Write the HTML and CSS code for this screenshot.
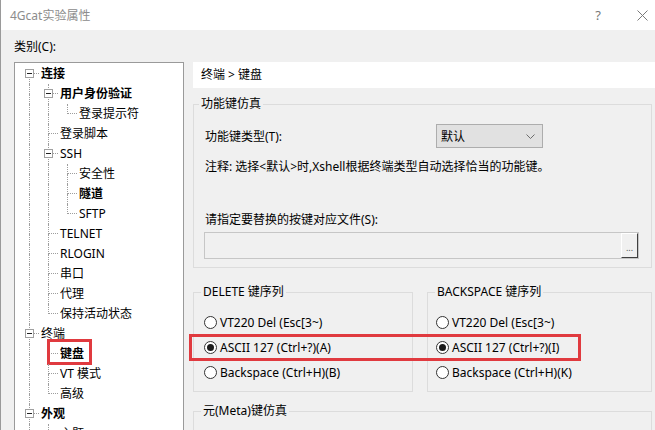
FILE: index.html
```html
<!DOCTYPE html>
<html lang="zh-CN">
<head>
<meta charset="utf-8">
<title>4Gcat实验属性</title>
<link rel="stylesheet" href="styles.css">
</head>
<body>
<div class="win">
  <div class="titlebar">
    <span class="title">4Gcat实验属性</span>
    <span class="tb-help">?</span>
    <span class="tb-close"><svg width="11" height="11" viewBox="0 0 11 11"><path d="M0.5 0.5L10.5 10.5M10.5 0.5L0.5 10.5" stroke="#7a7a7a" stroke-width="1" fill="none"/></svg></span>
  </div>
  <div class="body">
    <div class="cat-label">类别(C):</div>
    <div class="content">
      <div class="tree">
        <div class="row"><span class="g first"><i class="tr"></i><i class="br"></i><b class="bx"></b></span><span class="lbl strong">连接</span></div>
        <div class="row"><span class="g line"><i class="tr"></i><i class="br"></i></span><span class="g tee"><i class="tr"></i><i class="br"></i><b class="bx"></b></span><span class="lbl strong">用户身份验证</span></div>
        <div class="row"><span class="g line"><i class="tr"></i><i class="br"></i></span><span class="g line"><i class="tr"></i><i class="br"></i></span><span class="g ell"><i class="tr"></i><i class="br"></i></span><span class="lbl">登录提示符</span></div>
        <div class="row"><span class="g line"><i class="tr"></i><i class="br"></i></span><span class="g tee"><i class="tr"></i><i class="br"></i></span><span class="lbl">登录脚本</span></div>
        <div class="row"><span class="g line"><i class="tr"></i><i class="br"></i></span><span class="g tee"><i class="tr"></i><i class="br"></i><b class="bx"></b></span><span class="lbl">SSH</span></div>
        <div class="row"><span class="g line"><i class="tr"></i><i class="br"></i></span><span class="g line"><i class="tr"></i><i class="br"></i></span><span class="g tee"><i class="tr"></i><i class="br"></i></span><span class="lbl">安全性</span></div>
        <div class="row"><span class="g line"><i class="tr"></i><i class="br"></i></span><span class="g line"><i class="tr"></i><i class="br"></i></span><span class="g tee"><i class="tr"></i><i class="br"></i></span><span class="lbl strong">隧道</span></div>
        <div class="row"><span class="g line"><i class="tr"></i><i class="br"></i></span><span class="g line"><i class="tr"></i><i class="br"></i></span><span class="g ell"><i class="tr"></i><i class="br"></i></span><span class="lbl">SFTP</span></div>
        <div class="row"><span class="g line"><i class="tr"></i><i class="br"></i></span><span class="g tee"><i class="tr"></i><i class="br"></i></span><span class="lbl">TELNET</span></div>
        <div class="row"><span class="g line"><i class="tr"></i><i class="br"></i></span><span class="g tee"><i class="tr"></i><i class="br"></i></span><span class="lbl">RLOGIN</span></div>
        <div class="row"><span class="g line"><i class="tr"></i><i class="br"></i></span><span class="g tee"><i class="tr"></i><i class="br"></i></span><span class="lbl">串口</span></div>
        <div class="row"><span class="g line"><i class="tr"></i><i class="br"></i></span><span class="g tee"><i class="tr"></i><i class="br"></i></span><span class="lbl">代理</span></div>
        <div class="row"><span class="g line"><i class="tr"></i><i class="br"></i></span><span class="g ell"><i class="tr"></i><i class="br"></i></span><span class="lbl">保持活动状态</span></div>
        <div class="row"><span class="g tee"><i class="tr"></i><i class="br"></i><b class="bx"></b></span><span class="lbl">终端</span></div>
        <div class="row"><span class="g line"><i class="tr"></i><i class="br"></i></span><span class="g tee"><i class="tr"></i><i class="br"></i></span><span class="lbl strong">键盘</span><span class="mark-tree"></span></div>
        <div class="row"><span class="g line"><i class="tr"></i><i class="br"></i></span><span class="g tee"><i class="tr"></i><i class="br"></i></span><span class="lbl">VT 模式</span></div>
        <div class="row"><span class="g line"><i class="tr"></i><i class="br"></i></span><span class="g ell"><i class="tr"></i><i class="br"></i></span><span class="lbl">高级</span></div>
        <div class="row"><span class="g tee"><i class="tr"></i><i class="br"></i><b class="bx"></b></span><span class="lbl strong">外观</span></div>
        <div class="row"><span class="g line"><i class="tr"></i><i class="br"></i></span><span class="g tee"><i class="tr"></i><i class="br"></i></span><span class="lbl">主题</span></div>
      </div>
      <div class="panel">
        <div class="panel-head">终端 &gt; 键盘</div>
        <fieldset class="grp grp-fn">
          <legend class="lg-fn">功能键仿真</legend>
          <div class="fn-body">
            <div class="fn-row">
              <span class="fn-label">功能键类型(T):</span>
              <span class="select"><span>默认</span><svg class="chev" width="9" height="5" viewBox="0 0 9 5"><path d="M0.5 0.5L4.5 4.5L8.5 0.5" stroke="#6d6d6d" stroke-width="1" fill="none"/></svg></span>
            </div>
            <div class="note">注释: 选择&lt;默认&gt;时,Xshell根据终端类型自动选择恰当的功能键。</div>
            <div class="file-label">请指定要替换的按键对应文件(S):</div>
            <div class="file-box"><span class="browse">...</span></div>
          </div>
        </fieldset>
        <div class="grp-row">
          <fieldset class="grp grp-del">
            <legend class="lg">DELETE 键序列</legend>
            <div class="radios">
              <div class="opt"><span class="radio"></span><span>VT220 Del (Esc[3~)</span></div>
              <div class="opt"><span class="radio on"></span><span>ASCII 127 (Ctrl+?)(A)</span></div>
              <div class="opt"><span class="radio"></span><span>Backspace (Ctrl+H)(B)</span></div>
            </div>
          </fieldset>
          <fieldset class="grp grp-bs">
            <legend class="lg">BACKSPACE 键序列</legend>
            <div class="radios radios-bs">
              <div class="opt"><span class="radio"></span><span>VT220 Del (Esc[3~)</span></div>
              <div class="opt"><span class="radio on"></span><span>ASCII 127 (Ctrl+?)(I)</span></div>
              <div class="opt"><span class="radio"></span><span>Backspace (Ctrl+H)(K)</span></div>
            </div>
          </fieldset>
        </div>
        <fieldset class="grp grp-meta">
          <legend class="lg">元(Meta)键仿真</legend>
          <div class="meta-body"></div>
        </fieldset>
        <div class="mark-panel"></div>
      </div>
    </div>
  </div>
</div>
</body>
</html>
```
FILE: styles.css
```css
html, body {
  margin: 0;
  padding: 0;
}
body {
  width: 655px;
  height: 430px;
  overflow: hidden;
  background: #f0f0f0;
  font-family: "Noto Sans", "Noto Sans CJK SC", sans-serif;
  font-size: 12px;
  color: #000;
}
.win {
  display: flex;
  flex-direction: column;
  height: 430px;
  box-sizing: border-box;
  border-left: 1px solid #9a9a9a;
}
.titlebar {
  height: 30px;
  flex: none;
  background: #fff;
  display: flex;
  align-items: center;
  padding-left: 9px;
  color: #8c8c8c;
}
.title {
  flex: 1;
}
.tb-help {
  width: 12px;
  text-align: center;
  margin-right: 33px;
  font-size: 13px;
  color: #777;
}
.tb-close {
  display: flex;
  margin-right: 7px;
}
.body {
  flex: 1;
  min-height: 0;
  display: flex;
  flex-direction: column;
  padding-left: 13px;
}
.cat-label {
  padding-top: 9px;
  line-height: 16px;
}
.content {
  flex: 1;
  min-height: 0;
  display: flex;
  margin-top: 7px;
}
/* tree */
.tree {
  width: 170px;
  flex: none;
  box-sizing: border-box;
  border: 1px solid #9a9a9a;
  border-bottom: none;
  background: #fff;
  padding-top: 1px;
  overflow: hidden;
}
.row {
  position: relative;
  display: flex;
  height: 20px;
  padding-left: 5px;
  white-space: nowrap;
}
.g {
  display: grid;
  grid-template-columns: 9px 10px;
  grid-template-rows: 10px 10px;
  width: 19px;
  height: 20px;
  flex: none;
}
.g i {
  display: block;
  box-sizing: border-box;
  grid-column: 2;
}
.g .tr { grid-row: 1; }
.g .br { grid-row: 2; }
.g.line .tr, .g.line .br,
.g.tee .tr, .g.tee .br,
.g.ell .tr {
  border-left: 1px dotted #9d9d9d;
}
.g.tee .tr, .g.ell .tr, .g.first .tr {
  border-bottom: 1px dotted #9d9d9d;
}
.g.first .br {
  border-left: 1px dotted #9d9d9d;
}
.bx {
  grid-column: 1 / 3;
  grid-row: 1 / 3;
  align-self: start;
  justify-self: start;
  width: 9px;
  height: 9px;
  margin: 5px 0 0 5px;
  box-sizing: border-box;
  border: 1px solid #a0a0a0;
  background: #fff;
  z-index: 1;
  display: grid;
  place-items: center;
}
.bx::before {
  content: "";
  width: 5px;
  height: 1px;
  background: #222;
}
.lbl {
  padding-left: 2px;
  line-height: 20px;
}
.lbl.strong {
  font-weight: bold;
}
.mark-tree {
  position: absolute;
  left: 32px;
  top: -5px;
  width: 45px;
  height: 26px;
  box-sizing: border-box;
  border: 3px solid #e03a3f;
}
/* panel */
.panel {
  flex: 1;
  min-width: 0;
  margin-left: 9px;
  position: relative;
  display: flex;
  flex-direction: column;
}
.panel-head {
  height: 26px;
  flex: none;
  background: #fff;
  line-height: 26px;
  padding-left: 8px;
}
.grp {
  margin: 8px 3px 0 0;
  border: 1px solid #dcdcdc;
  padding: 0;
  min-width: 0;
}
.grp legend {
  padding: 0 2px;
  line-height: 16px;
  margin-left: 7px;
}
.grp legend.lg-fn {
  margin-left: 5px;
}
.fn-body {
  padding: 12px 11px 8px 11px;
}
.fn-row {
  display: flex;
  align-items: center;
  height: 24px;
}
.fn-label {
  width: 231px;
  flex: none;
}
.select {
  width: 107px;
  height: 24px;
  box-sizing: border-box;
  border: 1px solid #adadad;
  background: #e1e1e1;
  display: flex;
  align-items: center;
  padding-left: 4px;
  padding-right: 7px;
}
.chev {
  margin-left: auto;
}
.note {
  margin-top: 11px;
  line-height: 16px;
  white-space: nowrap;
}
.file-label {
  margin-top: 37px;
  line-height: 16px;
}
.file-box {
  margin: 4px 0 0 -1px;
  width: 435px;
  height: 27px;
  box-sizing: border-box;
  border: 1px solid #c6c6c6;
  background: #f0f0f0;
  display: flex;
  justify-content: flex-end;
}
.browse {
  width: 17px;
  height: 25px;
  box-sizing: border-box;
  border-top: 1px solid #fff;
  border-left: 1px solid #fff;
  border-right: 1px solid #404040;
  border-bottom: 1px solid #404040;
  display: flex;
  align-items: flex-end;
  justify-content: center;
  font-size: 9px;
  line-height: 14px;
  color: #555;
  padding-bottom: 2px;
}
.grp-row {
  display: flex;
  gap: 14px;
  margin: 16px 3px 0 0;
}
.grp-row .grp {
  margin: 0;
}
.grp-del {
  width: 220px;
  box-sizing: border-box;
  flex: none;
}
.grp-bs {
  flex: 1;
}
.radios {
  display: flex;
  flex-direction: column;
  gap: 5px;
  padding: 12px 9px 9px 10px;
}
.radios-bs {
  padding-left: 8px;
}
.opt {
  display: flex;
  align-items: center;
  height: 20px;
  white-space: nowrap;
}
.radio {
  width: 13px;
  height: 13px;
  flex: none;
  box-sizing: border-box;
  border: 1px solid #333;
  border-radius: 50%;
  background: #fff;
  margin-right: 3px;
  display: grid;
  place-items: center;
}
.radio.on::after {
  content: "";
  width: 7px;
  height: 7px;
  border-radius: 50%;
  background: #1b1b1b;
}
.grp-meta {
  margin-top: 11px;
  flex: 1;
}
.meta-body {
  height: 40px;
}
.mark-panel {
  position: absolute;
  left: -4px;
  top: 272px;
  width: 392px;
  height: 27px;
  box-sizing: border-box;
  border: 3px solid #e03a3f;
}
```
